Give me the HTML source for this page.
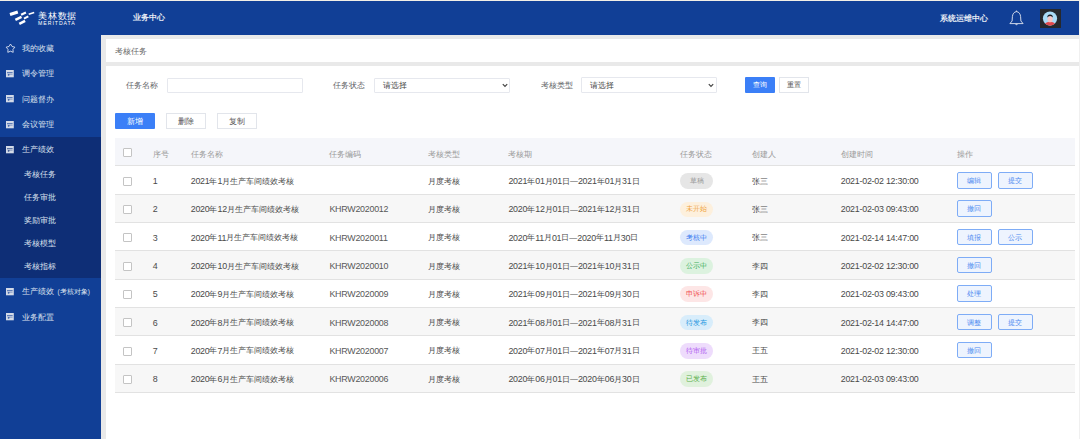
<!DOCTYPE html>
<html><head><meta charset="utf-8">
<style>
*{box-sizing:border-box;margin:0;padding:0}
html,body{width:1080px;height:439px;overflow:hidden;background:#f0f0f0;font-family:"Liberation Sans",sans-serif}
.abs{position:absolute}
#topline{left:0;top:0;width:1080px;height:1px;background:#f2eee6}
#hdr{left:0;top:1px;width:1079px;height:34px;background:#113f96}
#side{left:0;top:35px;width:101px;height:404px;background:#113f96}
#subgrp{left:0;top:136.5px;width:101px;height:141px;background:#0e2e76}
.wt{color:#fff;white-space:nowrap;line-height:1}
.mi{font-size:7.9px;color:#dde3ef;white-space:nowrap;line-height:1}
.ic{width:8px;height:8px;background:#fff;}
#gray{left:101px;top:35px;width:978px;height:404px;background:#e9e9e9}
#crumb{left:106px;top:39px;width:973px;height:23px;background:#fff}
#main{left:106px;top:66px;width:973px;height:373px;background:#fff}
.lbl{font-size:7.9px;color:#606266;white-space:nowrap;line-height:1}
.inp{background:#fff;border:1px solid #e6e8ee;border-radius:1px}
.btn{border:1px solid #e2e5eb;background:#fff;font-size:7px;color:#555;text-align:center;white-space:nowrap}
.btnp{background:#3b7ff7;color:#fff;border:none;font-size:7px;text-align:center;white-space:nowrap}
.row{left:115px;width:960px;height:28.3px;border-bottom:1px solid #e2e2e2}
.cell{position:absolute;top:0;height:100%;display:flex;align-items:center;padding-top:2px;font-size:7.9px;color:#4a4a4a;white-space:nowrap}
.n{font-size:8.9px;letter-spacing:-0.24px}
.dash{position:relative;top:-0.4px}
.hcell{color:#999;font-size:7.9px}
.cb{position:absolute;left:8px;width:9px;height:9px;border:1px solid #c4c4c4;background:#fff;border-radius:1px}
.pill{position:absolute;left:565px;width:33.4px;height:15.5px;border-radius:8px;font-size:7px;display:flex;align-items:center;justify-content:center}
.ab{position:absolute;width:34.5px;height:16.5px;border:1px solid #7eacf6;background:#eef4fe;color:#4a88f0;border-radius:2px;font-size:6.8px;display:flex;align-items:center;justify-content:center;padding-top:1.6px}
</style></head><body>
<div id="topline" class="abs"></div>
<div id="hdr" class="abs"></div>
<!-- logo -->
<svg class="abs" style="left:0;top:0" width="40" height="30" viewBox="0 0 40 30">
<g stroke="#fff" stroke-linecap="butt">
<line x1="10" y1="14.4" x2="17.8" y2="11.9" stroke-width="3.2"/>
<line x1="21.1" y1="14.7" x2="25.9" y2="12.5" stroke-width="2.2"/>
<line x1="28.7" y1="14.2" x2="34.2" y2="12.4" stroke-width="1.6"/>
<line x1="15.4" y1="19.8" x2="21.5" y2="16.9" stroke-width="2.6"/>
<line x1="24" y1="18.6" x2="28.3" y2="16.4" stroke-width="2"/>
<line x1="19.3" y1="23.8" x2="25.1" y2="20.8" stroke-width="2.6"/>
</g></svg>
<div class="abs wt" style="left:38px;top:11.6px;font-size:8.6px;letter-spacing:0.8px;font-weight:normal">美林数据</div>
<div class="abs wt" style="left:38px;top:21.3px;font-size:5.2px;letter-spacing:0.95px">MERITDATA</div>
<div class="abs wt" style="left:132.5px;top:14px;font-size:7.9px;font-weight:bold;color:#e6ebf4">业务中心</div>
<div class="abs wt" style="left:940px;top:15.1px;font-size:8px;font-weight:bold;color:#e6ebf4">系统运维中心</div>
<!-- bell -->
<svg class="abs" style="left:1008px;top:9.5px" width="17" height="17" viewBox="0 0 17 17">
<path d="M8.5 1.6 C6.1 1.9 4.6 3.9 4.4 6.6 L4.1 11 L1.9 13.6 L15.1 13.6 L12.9 11 L12.6 6.6 C12.4 3.9 10.9 1.9 8.5 1.6 Z" fill="none" stroke="#e2e6f0" stroke-width="0.9" stroke-linejoin="round"/>
<circle cx="8.5" cy="1.1" r="0.7" fill="#e2e6f0"/>
<path d="M7.1 14.2 Q8.5 16.3 9.9 14.2 Z" fill="#e2e6f0"/>
</svg>
<!-- avatar -->
<div class="abs" style="left:1040px;top:9px;width:21px;height:18.7px;background:#26282d"></div>
<svg class="abs" style="left:1040px;top:9px" width="21" height="19" viewBox="0 0 21 19">
<defs><clipPath id="cc"><circle cx="10" cy="9.6" r="7.1"/></clipPath></defs>
<circle cx="10" cy="9.6" r="7.1" fill="#a9dbf7"/>
<g clip-path="url(#cc)">
<ellipse cx="10" cy="16" rx="5.6" ry="3.2" fill="#e2474a"/>
<ellipse cx="10.1" cy="10.2" rx="2.6" ry="3.1" fill="#f2c6c6"/>
<path d="M7.2 8.6 Q7.4 5.4 10 5.5 Q12.8 5.4 12.9 8.6 Q11.8 6.9 10 7 Q8.2 7 7.2 8.6 Z" fill="#1e1e22"/>
</g>
</svg>

<!-- sidebar -->
<div id="side" class="abs"></div>
<div id="subgrp" class="abs"></div>
<svg class="abs" style="left:5px;top:43px" width="11" height="11" viewBox="0 0 11 11"><polygon points="5.50,1.00 7.03,3.50 9.87,4.18 7.97,6.40 8.20,9.32 5.50,8.20 2.80,9.32 3.03,6.40 1.13,4.18 3.97,3.50" fill="none" stroke="#e6ebf5" stroke-width="0.85" stroke-linejoin="round"/></svg>
<div class="abs mi" style="left:22px;top:45.2px">我的收藏</div>
<svg class="abs" style="left:6px;top:69.8px" width="8" height="8" viewBox="0 0 8 8"><rect x="0" y="0" width="7.8" height="7.3" fill="#d3dae8"/><rect x="1" y="2.3" width="5.6" height="0.9" fill="#113f96" opacity="0.85"/><circle cx="2.6" cy="4.8" r="0.9" fill="#113f96" opacity="0.8"/><rect x="3" y="4.4" width="3.6" height="0.6" fill="#113f96" opacity="0.45"/></svg>
<div class="abs mi" style="left:22px;top:70.2px">调令管理</div>
<svg class="abs" style="left:6px;top:95.3px" width="8" height="8" viewBox="0 0 8 8"><rect x="0" y="0" width="7.8" height="7.3" fill="#d3dae8"/><rect x="1" y="2.3" width="5.6" height="0.9" fill="#113f96" opacity="0.85"/><circle cx="2.6" cy="4.8" r="0.9" fill="#113f96" opacity="0.8"/><rect x="3" y="4.4" width="3.6" height="0.6" fill="#113f96" opacity="0.45"/></svg>
<div class="abs mi" style="left:22px;top:95.7px">问题督办</div>
<svg class="abs" style="left:6px;top:120.8px" width="8" height="8" viewBox="0 0 8 8"><rect x="0" y="0" width="7.8" height="7.3" fill="#d3dae8"/><rect x="1" y="2.3" width="5.6" height="0.9" fill="#113f96" opacity="0.85"/><circle cx="2.6" cy="4.8" r="0.9" fill="#113f96" opacity="0.8"/><rect x="3" y="4.4" width="3.6" height="0.6" fill="#113f96" opacity="0.45"/></svg>
<div class="abs mi" style="left:22px;top:121.2px">会议管理</div>
<svg class="abs" style="left:6px;top:145.8px" width="8" height="8" viewBox="0 0 8 8"><rect x="0" y="0" width="7.8" height="7.3" fill="#d3dae8"/><rect x="1" y="2.3" width="5.6" height="0.9" fill="#0e2e76" opacity="0.85"/><circle cx="2.6" cy="4.8" r="0.9" fill="#0e2e76" opacity="0.8"/><rect x="3" y="4.4" width="3.6" height="0.6" fill="#0e2e76" opacity="0.45"/></svg>
<div class="abs mi" style="left:22px;top:146.2px">生产绩效</div>
<div class="abs mi" style="left:24px;top:170.7px">考核任务</div>
<div class="abs mi" style="left:24px;top:193.7px">任务审批</div>
<div class="abs mi" style="left:24px;top:216.7px">奖励审批</div>
<div class="abs mi" style="left:24px;top:240.2px">考核模型</div>
<div class="abs mi" style="left:24px;top:263.2px">考核指标</div>
<svg class="abs" style="left:6px;top:287.8px" width="8" height="8" viewBox="0 0 8 8"><rect x="0" y="0" width="7.8" height="7.3" fill="#d3dae8"/><rect x="1" y="2.3" width="5.6" height="0.9" fill="#113f96" opacity="0.85"/><circle cx="2.6" cy="4.8" r="0.9" fill="#113f96" opacity="0.8"/><rect x="3" y="4.4" width="3.6" height="0.6" fill="#113f96" opacity="0.45"/></svg>
<div class="abs mi" style="left:22px;top:288.2px">生产绩效<span style="font-size:6.6px;margin-left:3.5px">(考核对象)</span></div>
<svg class="abs" style="left:6px;top:313.3px" width="8" height="8" viewBox="0 0 8 8"><rect x="0" y="0" width="7.8" height="7.3" fill="#d3dae8"/><rect x="1" y="2.3" width="5.6" height="0.9" fill="#113f96" opacity="0.85"/><circle cx="2.6" cy="4.8" r="0.9" fill="#113f96" opacity="0.8"/><rect x="3" y="4.4" width="3.6" height="0.6" fill="#113f96" opacity="0.45"/></svg>
<div class="abs mi" style="left:22px;top:313.7px">业务配置</div>

<!-- content -->
<div id="gray" class="abs"></div>
<div id="crumb" class="abs"></div>
<div class="abs lbl" style="left:115px;top:48px;color:#666">考核任务</div>
<div id="main" class="abs"></div>

<div class="abs lbl" style="left:126.4px;top:82.3px">任务名称</div>
<div class="abs inp" style="left:167px;top:77.6px;width:135.6px;height:15px"></div>
<div class="abs lbl" style="left:333.4px;top:82.3px">任务状态</div>
<div class="abs inp" style="left:374.2px;top:77.6px;width:135.4px;height:15px"></div>
<div class="abs lbl" style="left:382.8px;top:82.3px;color:#444">请选择</div>
<svg class="abs" style="left:501.5px;top:82.5px" width="6" height="5" viewBox="0 0 6 5"><path d="M0.8 1.2 L3 3.5 L5.2 1.2" fill="none" stroke="#444" stroke-width="1.2"/></svg>
<div class="abs lbl" style="left:540.5px;top:82.3px">考核类型</div>
<div class="abs inp" style="left:581px;top:77.4px;width:135.5px;height:15.2px"></div>
<div class="abs lbl" style="left:589.5px;top:82.3px;color:#444">请选择</div>
<svg class="abs" style="left:708px;top:82.5px" width="6" height="5" viewBox="0 0 6 5"><path d="M0.8 1.2 L3 3.5 L5.2 1.2" fill="none" stroke="#444" stroke-width="1.2"/></svg>
<div class="abs btnp" style="left:745.3px;top:77.3px;width:29.5px;height:15.6px;line-height:16px;border-radius:1px">查询</div>
<div class="abs btn" style="left:779.3px;top:77.3px;width:29.8px;height:15.6px;line-height:14px">重置</div>

<div class="abs btnp" style="left:115.3px;top:113px;width:39.5px;height:15.6px;line-height:18px;border-radius:1px;font-size:8px">新增</div>
<div class="abs btn" style="left:166.3px;top:113px;width:39.5px;height:15.6px;line-height:16px;font-size:8px">删除</div>
<div class="abs btn" style="left:217.2px;top:113px;width:39.6px;height:15.6px;line-height:16px;font-size:8px">复制</div>

<!-- table -->
<div class="abs row" style="top:138px;height:28px;background:#f5f6fa">
<div class="cb" style="top:10.3px"></div>
<div class="cell hcell" style="left:37.80000000000001px;padding-top:6.6px">序号</div>
<div class="cell hcell" style="left:75.69999999999999px;padding-top:6.6px">任务名称</div>
<div class="cell hcell" style="left:214.39999999999998px;padding-top:6.6px">任务编码</div>
<div class="cell hcell" style="left:312.5px;padding-top:6.6px">考核类型</div>
<div class="cell hcell" style="left:393.4px;padding-top:6.6px">考核期</div>
<div class="cell hcell" style="left:565.4px;padding-top:6.6px">任务状态</div>
<div class="cell hcell" style="left:636.5px;padding-top:6.6px">创建人</div>
<div class="cell hcell" style="left:725.7px;padding-top:6.6px">创建时间</div>
<div class="cell hcell" style="left:842.2px;padding-top:6.6px">操作</div>
</div>
<div class="abs row" style="top:166.50px;height:28.3px;background:#ffffff">
<div class="cb" style="top:10.3px"></div>
<div class="cell" style="left:37.80000000000001px"><span class="n">1</span></div>
<div class="cell" style="left:75.69999999999999px"><span class="n">2021</span>年<span class="n">1</span>月生产车间绩效考核</div>
<div class="cell" style="left:214.39999999999998px;color:#585858"></div>
<div class="cell" style="left:312.5px">月度考核</div>
<div class="cell" style="left:393.4px"><span class="n">2021</span>年<span class="n">01</span>月<span class="n">01</span>日<span class=dash>—</span><span class="n">2021</span>年<span class="n">01</span>月<span class="n">31</span>日</div>
<div class="cell" style="left:636.5px">张三</div>
<div class="cell" style="left:725.7px"><span class="n">2021-02-02 12:30:00</span></div>
<div class="pill" style="left:564.9px;top:6.8px;background:#e6e6e6;color:#9a9a9a">草稿</div>
<div class="ab" style="left:842.2px;top:5.6px">编辑</div>
<div class="ab" style="left:883.2px;top:5.6px">提交</div>
</div>
<div class="abs row" style="top:194.80px;height:28.3px;background:#f7f7f7">
<div class="cb" style="top:10.3px"></div>
<div class="cell" style="left:37.80000000000001px"><span class="n">2</span></div>
<div class="cell" style="left:75.69999999999999px"><span class="n">2020</span>年<span class="n">12</span>月生产车间绩效考核</div>
<div class="cell" style="left:214.39999999999998px;color:#585858"><span class="n">KHRW2020012</span></div>
<div class="cell" style="left:312.5px">月度考核</div>
<div class="cell" style="left:393.4px"><span class="n">2020</span>年<span class="n">12</span>月<span class="n">01</span>日<span class=dash>—</span><span class="n">2021</span>年<span class="n">12</span>月<span class="n">31</span>日</div>
<div class="cell" style="left:636.5px">张三</div>
<div class="cell" style="left:725.7px"><span class="n">2021-02-03 09:43:00</span></div>
<div class="pill" style="left:564.9px;top:6.8px;background:#fdf0dd;color:#f0a23c">未开始</div>
<div class="ab" style="left:842.2px;top:5.6px">撤回</div>
</div>
<div class="abs row" style="top:223.10px;height:28.3px;background:#ffffff">
<div class="cb" style="top:10.3px"></div>
<div class="cell" style="left:37.80000000000001px"><span class="n">3</span></div>
<div class="cell" style="left:75.69999999999999px"><span class="n">2020</span>年<span class="n">11</span>月生产车间绩效考核</div>
<div class="cell" style="left:214.39999999999998px;color:#585858"><span class="n">KHRW2020011</span></div>
<div class="cell" style="left:312.5px">月度考核</div>
<div class="cell" style="left:393.4px"><span class="n">2020</span>年<span class="n">11</span>月<span class="n">01</span>日<span class=dash>—</span><span class="n">2020</span>年<span class="n">11</span>月<span class="n">30</span>日</div>
<div class="cell" style="left:636.5px">张三</div>
<div class="cell" style="left:725.7px"><span class="n">2021-02-14 14:47:00</span></div>
<div class="pill" style="left:564.9px;top:6.8px;background:#dde9fd;color:#3b7cf0">考核中</div>
<div class="ab" style="left:842.2px;top:5.6px">填报</div>
<div class="ab" style="left:883.2px;top:5.6px">公示</div>
</div>
<div class="abs row" style="top:251.40px;height:28.3px;background:#f7f7f7">
<div class="cb" style="top:10.3px"></div>
<div class="cell" style="left:37.80000000000001px"><span class="n">4</span></div>
<div class="cell" style="left:75.69999999999999px"><span class="n">2020</span>年<span class="n">10</span>月生产车间绩效考核</div>
<div class="cell" style="left:214.39999999999998px;color:#585858"><span class="n">KHRW2020010</span></div>
<div class="cell" style="left:312.5px">月度考核</div>
<div class="cell" style="left:393.4px"><span class="n">2021</span>年<span class="n">10</span>月<span class="n">01</span>日<span class=dash>—</span><span class="n">2021</span>年<span class="n">10</span>月<span class="n">31</span>日</div>
<div class="cell" style="left:636.5px">李四</div>
<div class="cell" style="left:725.7px"><span class="n">2021-02-02 12:30:00</span></div>
<div class="pill" style="left:564.9px;top:6.8px;background:#dcf2df;color:#3daf5c">公示中</div>
<div class="ab" style="left:842.2px;top:5.6px">撤回</div>
</div>
<div class="abs row" style="top:279.70px;height:28.3px;background:#ffffff">
<div class="cb" style="top:10.3px"></div>
<div class="cell" style="left:37.80000000000001px"><span class="n">5</span></div>
<div class="cell" style="left:75.69999999999999px"><span class="n">2020</span>年<span class="n">9</span>月生产车间绩效考核</div>
<div class="cell" style="left:214.39999999999998px;color:#585858"><span class="n">KHRW2020009</span></div>
<div class="cell" style="left:312.5px">月度考核</div>
<div class="cell" style="left:393.4px"><span class="n">2021</span>年<span class="n">09</span>月<span class="n">01</span>日<span class=dash>—</span><span class="n">2021</span>年<span class="n">09</span>月<span class="n">30</span>日</div>
<div class="cell" style="left:636.5px">李四</div>
<div class="cell" style="left:725.7px"><span class="n">2021-02-03 09:43:00</span></div>
<div class="pill" style="left:564.9px;top:6.8px;background:#fde6e6;color:#f04a4a">申诉中</div>
<div class="ab" style="left:842.2px;top:5.6px">处理</div>
</div>
<div class="abs row" style="top:308.00px;height:28.3px;background:#f7f7f7">
<div class="cb" style="top:10.3px"></div>
<div class="cell" style="left:37.80000000000001px"><span class="n">6</span></div>
<div class="cell" style="left:75.69999999999999px"><span class="n">2020</span>年<span class="n">8</span>月生产车间绩效考核</div>
<div class="cell" style="left:214.39999999999998px;color:#585858"><span class="n">KHRW2020008</span></div>
<div class="cell" style="left:312.5px">月度考核</div>
<div class="cell" style="left:393.4px"><span class="n">2021</span>年<span class="n">08</span>月<span class="n">01</span>日<span class=dash>—</span><span class="n">2021</span>年<span class="n">08</span>月<span class="n">31</span>日</div>
<div class="cell" style="left:636.5px">李四</div>
<div class="cell" style="left:725.7px"><span class="n">2021-02-14 14:47:00</span></div>
<div class="pill" style="left:564.9px;top:6.8px;background:#d8edfb;color:#2596e0">待发布</div>
<div class="ab" style="left:842.2px;top:5.6px">调整</div>
<div class="ab" style="left:883.2px;top:5.6px">提交</div>
</div>
<div class="abs row" style="top:336.30px;height:28.3px;background:#ffffff">
<div class="cb" style="top:10.3px"></div>
<div class="cell" style="left:37.80000000000001px"><span class="n">7</span></div>
<div class="cell" style="left:75.69999999999999px"><span class="n">2020</span>年<span class="n">7</span>月生产车间绩效考核</div>
<div class="cell" style="left:214.39999999999998px;color:#585858"><span class="n">KHRW2020007</span></div>
<div class="cell" style="left:312.5px">月度考核</div>
<div class="cell" style="left:393.4px"><span class="n">2020</span>年<span class="n">07</span>月<span class="n">01</span>日<span class=dash>—</span><span class="n">2021</span>年<span class="n">07</span>月<span class="n">31</span>日</div>
<div class="cell" style="left:636.5px">王五</div>
<div class="cell" style="left:725.7px"><span class="n">2021-02-02 12:30:00</span></div>
<div class="pill" style="left:564.9px;top:6.8px;background:#eedcfc;color:#b05cf0">待审批</div>
<div class="ab" style="left:842.2px;top:5.6px">撤回</div>
</div>
<div class="abs row" style="top:364.60px;height:28.3px;background:#f7f7f7">
<div class="cb" style="top:10.3px"></div>
<div class="cell" style="left:37.80000000000001px"><span class="n">8</span></div>
<div class="cell" style="left:75.69999999999999px"><span class="n">2020</span>年<span class="n">6</span>月生产车间绩效考核</div>
<div class="cell" style="left:214.39999999999998px;color:#585858"><span class="n">KHRW2020006</span></div>
<div class="cell" style="left:312.5px">月度考核</div>
<div class="cell" style="left:393.4px"><span class="n">2020</span>年<span class="n">06</span>月<span class="n">01</span>日<span class=dash>—</span><span class="n">2020</span>年<span class="n">06</span>月<span class="n">30</span>日</div>
<div class="cell" style="left:636.5px">王五</div>
<div class="cell" style="left:725.7px"><span class="n">2021-02-03 09:43:00</span></div>
<div class="pill" style="left:564.9px;top:6.8px;background:#e0f1dd;color:#5aaf4c">已发布</div>
</div>
</body></html>
